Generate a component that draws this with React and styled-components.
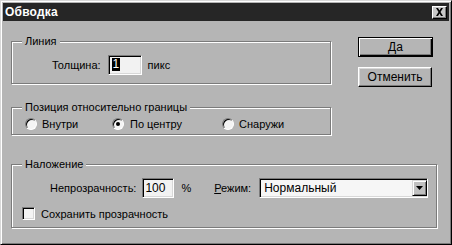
import styled, { createGlobalStyle } from 'styled-components';

const Global = createGlobalStyle`
  body {
    margin: 0;
    background: #b5b5b5;
    font-family: "Liberation Sans", Arial, sans-serif;
    font-size: 11px;
    color: #000;
  }
`;

const Window = styled.div`
  width: 452px;
  height: 245px;
  box-sizing: border-box;
  background: #b5b5b5;
  border: 1px solid;
  border-color: #d8d8d8 #000 #000 #d8d8d8;
  box-shadow: inset 1px 1px 0 #fff, inset -1px -1px 0 #7b7b7b;
  padding: 2px;
  display: flex;
  flex-direction: column;
`;

const TitleBar = styled.div`
  height: 18px;
  background: #262626;
  display: flex;
  align-items: center;
  justify-content: space-between;
  padding: 0 2px 0 2px;
`;

const Title = styled.span`
  color: #fff;
  font-weight: bold;
  font-size: 12px;
  letter-spacing: 0.2px;
`;

const CloseBtn = styled.div`
  width: 15px;
  height: 13px;
  box-sizing: border-box;
  background: #c8c8c8;
  border: 1px solid;
  border-color: #fff #000 #000 #fff;
  box-shadow: inset -1px -1px 0 #7b7b7b;
  display: flex;
  align-items: center;
  justify-content: center;
`;

const Body = styled.div`
  padding: 20px 0 0 8px;
  display: flex;
  flex-direction: column;
`;

const TopRow = styled.div`
  display: flex;
  align-items: flex-start;
`;

const LeftCol = styled.div`
  display: flex;
  flex-direction: column;
  gap: 23px;
  width: 321px;
`;

const RightCol = styled.div`
  display: flex;
  flex-direction: column;
  gap: 10px;
  margin: -4px 0 0 26px;
`;

const Group = styled.div`
  position: relative;
  box-sizing: border-box;
  width: ${(p) => p.$w || 320}px;
  height: ${(p) => p.$h}px;
  margin-top: ${(p) => p.$mt || 0}px;
  border: 1px solid #7b7b7b;
  box-shadow: inset 1px 1px 0 #fff, 1px 1px 0 #fff;
  padding: ${(p) => p.$pad || '0'};
  display: flex;
  flex-direction: column;
  justify-content: ${(p) => p.$justify || 'center'};
`;

const Legend = styled.span`
  position: absolute;
  top: -8px;
  left: 10px;
  padding: 0 3px 0 3px;
  background: #b5b5b5;
  line-height: 14px;
`;

const Row = styled.div`
  display: flex;
  align-items: center;
  padding-left: ${(p) => p.$indent || 0}px;
  margin-top: ${(p) => p.$mt || 0}px;
`;

const Label = styled.span`
  margin-right: ${(p) => p.$mr || 0}px;
`;

const Sunken = styled.div`
  box-sizing: border-box;
  width: ${(p) => p.$w}px;
  height: ${(p) => p.$h || 20}px;
  background: ${(p) => p.$bg || '#f2f2f2'};
  border: 1px solid;
  border-color: #7b7b7b #fff #fff #7b7b7b;
  box-shadow: inset 1px 1px 0 #000, inset -1px -1px 0 #d8d8d8;
  display: flex;
  align-items: center;
  padding-left: ${(p) => p.$pl || 3}px;
  margin-right: ${(p) => p.$mr || 0}px;
  font-size: 12px;
`;

const Selected = styled.span`
  background: #000;
  color: #fff;
  line-height: 13px;
  padding: 0 1px;
`;

const Button = styled.div`
  box-sizing: border-box;
  width: ${(p) => (p.$default ? 75 : 74)}px;
  height: 20px;
  background: #b5b5b5;
  border: 1px solid;
  border-color: ${(p) => (p.$default ? '#000' : '#fff #000 #000 #fff')};
  box-shadow: ${(p) =>
    p.$default
      ? 'inset 1px 1px 0 #fff, inset -1px -1px 0 #000, inset -2px -2px 0 #7b7b7b'
      : 'inset -1px -1px 0 #7b7b7b, inset 1px 1px 0 #d8d8d8'};
  display: flex;
  align-items: center;
  justify-content: center;
  font-size: 12px;
`;

const RadioItem = styled.label`
  display: flex;
  align-items: center;
  width: ${(p) => p.$w}px;
`;

const RadioCircle = styled.span`
  box-sizing: border-box;
  width: 12px;
  height: 12px;
  border-radius: 50%;
  background: #f4f4f4;
  border: 1px solid;
  border-color: #7b7b7b #fff #fff #7b7b7b;
  box-shadow: inset 1px 1px 0 #000;
  display: flex;
  align-items: center;
  justify-content: center;
  margin-right: ${(p) => p.$mr || 5}px;

  &::after {
    content: '';
    width: 4px;
    height: 4px;
    border-radius: 50%;
    background: ${(p) => (p.$checked ? '#000' : 'transparent')};
  }
`;

const CheckBox = styled.span`
  box-sizing: border-box;
  width: 13px;
  height: 13px;
  background: #f4f4f4;
  border: 1px solid;
  border-color: #7b7b7b #fff #fff #7b7b7b;
  box-shadow: inset 1px 1px 0 #000, inset -1px -1px 0 #d8d8d8;
  margin-right: 6px;
`;

const DropBtn = styled.div`
  margin-left: auto;
  width: 15px;
  height: 16px;
  box-sizing: border-box;
  background: #c0c0c0;
  border: 1px solid;
  border-color: #d8d8d8 #000 #000 #d8d8d8;
  box-shadow: inset 1px 1px 0 #fff, inset -1px -1px 0 #7b7b7b;
  display: flex;
  align-items: center;
  justify-content: center;
`;

const Underline = styled.span`
  text-decoration: underline;
`;

function App() {
  return (
    <>
      <Global />
      <Window>
        <TitleBar>
          <Title>Обводка</Title>
          <CloseBtn>
            <svg width="9" height="8" viewBox="0 0 9 8">
              <path d="M1 0h2l1.5 2.5L6 0h2L5.5 4 8 8H6L4.5 5.5 3 8H1l2.5-4z" fill="#000" />
            </svg>
          </CloseBtn>
        </TitleBar>
        <Body>
          <TopRow>
            <LeftCol>
              <Group $h={43} $pad="4px 0 0 0">
                <Legend>Линия</Legend>
                <Row $indent={40}>
                  <Label $mr={7}>Толщина:</Label>
                  <Sunken $w={34} $mr={6} $pl={3}>
                    <Selected>1</Selected>
                  </Sunken>
                  <Label>пикс</Label>
                </Row>
              </Group>
              <Group $h={28} $pad="6px 0 0 0">
                <Legend>Позиция относительно границы</Legend>
                <Row $indent={13}>
                  <RadioItem $w={87}>
                    <RadioCircle />
                    Внутри
                  </RadioItem>
                  <RadioItem $w={110}>
                    <RadioCircle $checked $mr={6} />
                    По центру
                  </RadioItem>
                  <RadioItem $w={100}>
                    <RadioCircle />
                    Снаружи
                  </RadioItem>
                </Row>
              </Group>
            </LeftCol>
            <RightCol>
              <Button $default>Да</Button>
              <Button>Отменить</Button>
            </RightCol>
          </TopRow>
          <Group $w={426} $h={64} $mt={29} $justify="flex-start" $pad="13px 0 0 0">
            <Legend>Наложение</Legend>
            <Row $indent={38}>
              <Label $mr={6}>Непрозрачность:</Label>
              <Sunken $w={32} $mr={7} $pl={2}>100</Sunken>
              <Label $mr={23}>%</Label>
              <Label $mr={8}>
                <Underline>Р</Underline>ежим:
              </Label>
              <Sunken $w={169} $h={20} $bg="#f6f6f6" $pl={4}>
                Нормальный
                <DropBtn>
                  <svg width="7" height="4" viewBox="0 0 7 4">
                    <path d="M0 0h7L3.5 4z" fill="#000" />
                  </svg>
                </DropBtn>
              </Sunken>
            </Row>
            <Row $indent={10} $mt={9}>
              <CheckBox />
              Сохранить прозрачность
            </Row>
          </Group>
        </Body>
      </Window>
    </>
  );
}

export default App;
